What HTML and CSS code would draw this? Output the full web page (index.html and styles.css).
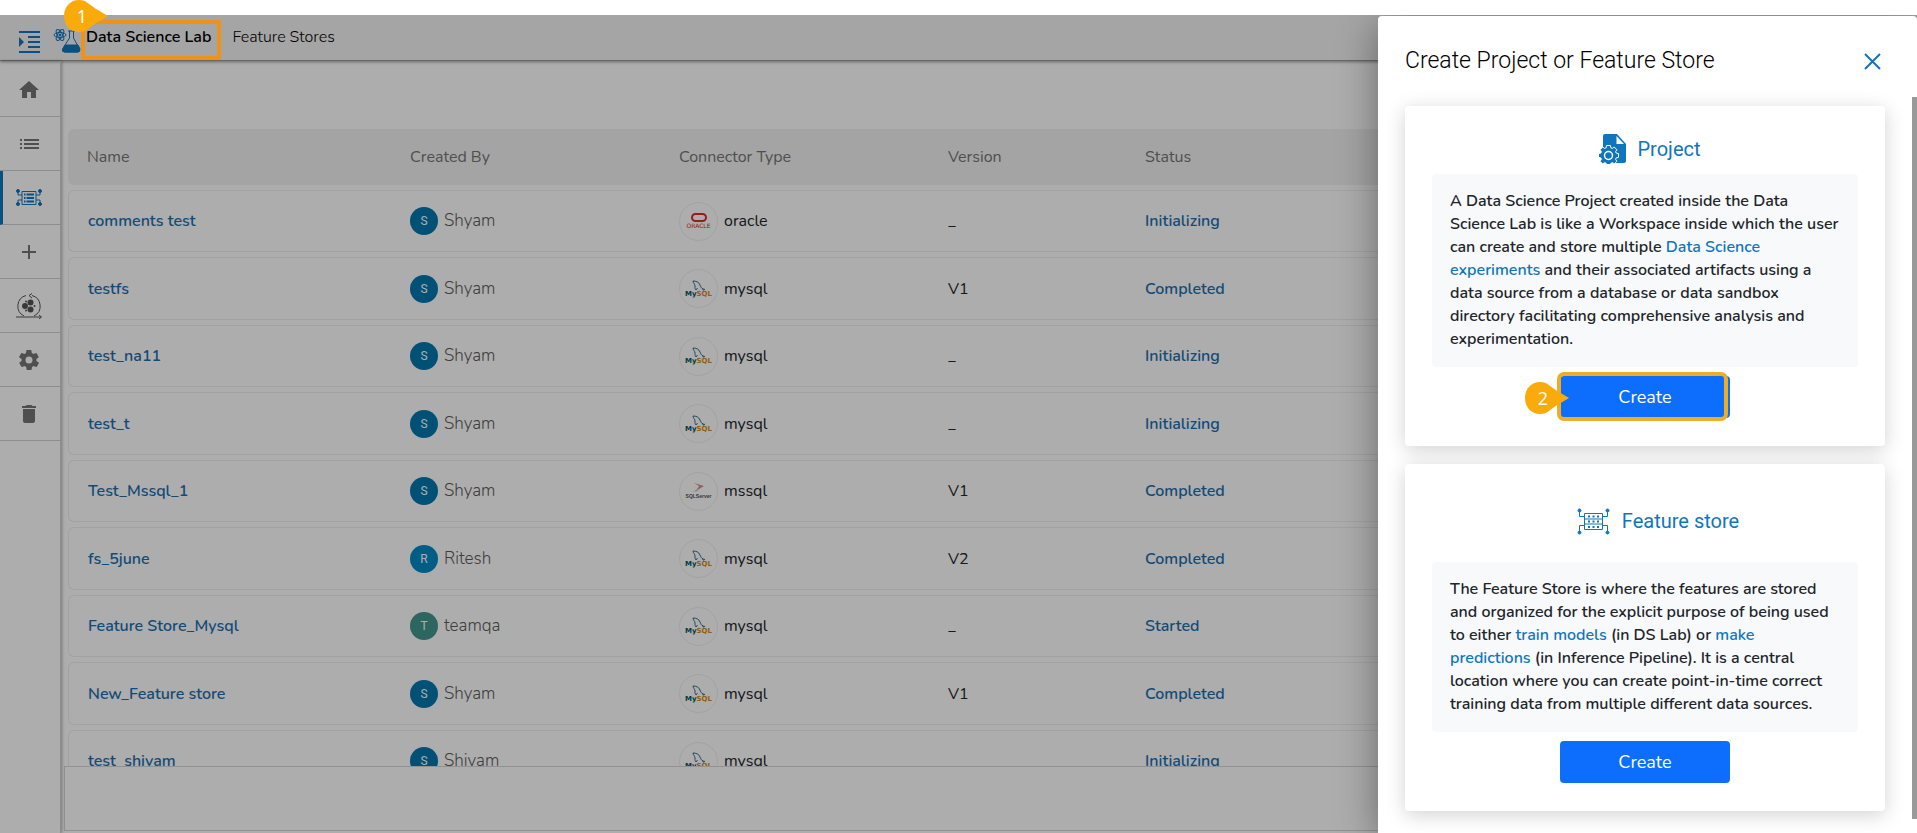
FILE: index.html
```
<!DOCTYPE html>
<html lang="en">
<head>
<meta charset="utf-8">
<title>Data Science Lab</title>
<link rel="stylesheet" href="styles.css">
</head>
<body>
<svg class="defs" aria-hidden="true">
  <symbol id="mysql" viewBox="0 0 14 11">
    <path d="M1 1c3 0 6 1 7 4 1 2 1 3 3 4l2 .5M1 1c0 2 2 3 2 5s0 3 1 4l1.500-2" fill="none" stroke="#2f6d88" stroke-width="1"/>
    <path d="M10.500 8.500l1 2" fill="none" stroke="#2f6d88"/>
  </symbol>
  <symbol id="oracle" viewBox="0 0 16 9">
    <rect x="1" y="1" width="14" height="7" rx="3.500" fill="none" stroke="#e0292b" stroke-width="2"/>
  </symbol>
  <symbol id="mssql" viewBox="0 0 14 11">
    <path d="M2 1l10 3-8 5 3-5z" fill="#e58a8c"/>
    <path d="M6 6l-5 4 5-1z" fill="#ccc"/>
  </symbol>
</svg>
<div class="app">
  <header class="topbar">
    <button class="menu-btn" aria-label="Toggle menu">
      <svg width="21" height="22" viewBox="0 0 21 22"><path d="M0 1h21M9 6h12M9 11h12M9 16h12M0 21h21" stroke="#0f76bd" stroke-width="2"/><path d="M0 6l5 5-5 5z" fill="#0f76bd"/></svg>
    </button>
    <svg class="lab-icon" width="28" height="25" viewBox="0 0 28 25" fill="none" stroke="#0f76bd"><ellipse cx="7" cy="7" rx="6" ry="2.500"/><ellipse cx="7" cy="7" rx="6" ry="2.500" transform="rotate(60 7 7)"/><ellipse cx="7" cy="7" rx="6" ry="2.500" transform="rotate(120 7 7)"/><circle cx="7" cy="7" r="1" fill="#0f76bd"/><path d="M15 3h7M16.500 3v7L9.500 21q-1 3 2 3h13q3 0 2-3L20.500 10V3"/><path d="M12 17h13l2 4q0 3-2 3H12q-3 0-2-3z" fill="#0f76bd"/></svg>
    <nav class="tabs"><a class="tab tab-active" href="#">Data Science Lab</a><a class="tab" href="#">Feature Stores</a></nav>
  </header>
  <div class="body">
    <nav class="rail">
      <a class="rail-item" href="#" aria-label="Home"><svg width="24" height="24" viewBox="0 0 24 24"><path d="M10 20v-6h4v6h5v-8h3L12 3 2 12h3v8z"/></svg></a>
      <a class="rail-item" href="#" aria-label="List"><svg width="24" height="24" viewBox="0 0 24 24"><path d="M3 7h2v2H3zM3 11h2v2H3zM3 15h2v2H3zM7 7h15v2H7zM7 11h15v2H7zM7 15h15v2H7z"/></svg></a>
      <a class="rail-item rail-active" href="#" aria-label="Data Science Lab"><svg width="26" height="18" viewBox="0 0 26 18" stroke="#0f76bd" fill="none"><circle cx="2" cy="2" r="1.500" fill="#0f76bd"/><circle cx="24" cy="2" r="1.500" fill="#0f76bd"/><circle cx="2" cy="15" r="1.500" fill="#0f76bd"/><circle cx="24" cy="15" r="1.500" fill="#0f76bd"/><path d="M2 2v4h4M24 2v4h-4M2 15v-4h4M24 15v-4h-4M6 2.500h14v13H6z"/><path d="M8 5.500h1.500M10.500 5.500H18M8 9h1.500M10.500 9H18M8 12.500h1.500M10.500 12.500H18" stroke-width="2"/></svg></a>
      <a class="rail-item" href="#" aria-label="Add"><svg width="24" height="24" viewBox="0 0 24 24"><path d="M11 5h2v6h6v2h-6v6h-2v-6H5v-2h6z"/></svg></a>
      <a class="rail-item" href="#" aria-label="Pipelines"><svg width="26" height="26" viewBox="0 0 26 26"><path d="M10 2.500A11 11 0 0 0 8 23M16 2.500A11 11 0 0 1 18 23M0 24h25M16 .5l-3 2 3 2.500M23 22l2.500 2-2.500 2" fill="none" stroke="#555"/><g fill="#555"><circle cx="9" cy="13" r="3"/><circle cx="14.500" cy="9.500" r="3"/><circle cx="14.500" cy="16.500" r="3"/><circle cx="18.500" cy="13" r="1"/><circle cx="10" cy="8.500" r="1"/><circle cx="10" cy="17.500" r="1"/></g></svg></a>
      <a class="rail-item" href="#" aria-label="Settings"><svg width="24" height="24" viewBox="0 0 24 24"><path d="M19.400 13c0-.3.100-.6.100-1s0-.7-.1-1l2.100-1.600c.2-.2.300-.4.100-.7l-2-3.400c-.1-.2-.4-.3-.6-.2l-2.500 1c-.5-.4-1.100-.7-1.700-1l-.4-2.600c0-.3-.2-.5-.5-.5h-4c-.3 0-.5.2-.5.400l-.4 2.700c-.6.2-1.200.6-1.700 1l-2.500-1c-.2-.1-.5 0-.6.200l-2 3.400c-.1.200-.1.500.1.700L4.600 11c0 .3-.1.700-.1 1s0 .7.100 1l-2.100 1.600c-.2.200-.3.400-.1.700l2 3.400c.1.200.4.300.6.200l2.500-1c.5.400 1.100.7 1.700 1l.4 2.600c0 .3.200.5.500.5h4c.3 0 .5-.2.500-.4l.4-2.700c.6-.2 1.200-.6 1.700-1l2.500 1c.2.100.5 0 .6-.2l2-3.400c.1-.2.100-.5-.1-.7zM12 15.500a3.500 3.500 0 1 1 0-7 3.500 3.500 0 0 1 0 7z"/></svg></a>
      <a class="rail-item" href="#" aria-label="Trash"><svg width="24" height="24" viewBox="0 0 24 24"><path d="M6 19c0 1.100.9 2 2 2h8c1.100 0 2-.9 2-2V7H6zM19 4h-3.500l-1-1h-5l-1 1H5v2h14z"/></svg></a>
    </nav>
    <main class="main">
      <div class="table-wrap">
      <table class="stores">
        <colgroup><col class="c-name"><col class="c-by"><col class="c-type"><col class="c-ver"><col class="c-status"></colgroup>
        <thead><tr><th>Name</th><th>Created By</th><th>Connector Type</th><th>Version</th><th>Status</th></tr></thead>
        <tbody>
          <tr><td><a href="#">comments test</a></td><td><div class="cell"><span class="avatar">S</span><span class="user">Shyam</span></div></td><td><div class="cell"><span class="logo"><svg class="mark-oracle"><use href="#oracle"/></svg><span class="word word-oracle">ORACLE</span></span>oracle</div></td><td>_</td><td><a href="#">Initializing</a></td></tr>
          <tr><td><a href="#">testfs</a></td><td><div class="cell"><span class="avatar">S</span><span class="user">Shyam</span></div></td><td><div class="cell"><span class="logo"><svg class="mark"><use href="#mysql"/></svg><span class="word">My<span class="word-sql">SQL</span></span></span>mysql</div></td><td>V1</td><td><a href="#">Completed</a></td></tr>
          <tr><td><a href="#">test_na11</a></td><td><div class="cell"><span class="avatar">S</span><span class="user">Shyam</span></div></td><td><div class="cell"><span class="logo"><svg class="mark"><use href="#mysql"/></svg><span class="word">My<span class="word-sql">SQL</span></span></span>mysql</div></td><td>_</td><td><a href="#">Initializing</a></td></tr>
          <tr><td><a href="#">test_t</a></td><td><div class="cell"><span class="avatar">S</span><span class="user">Shyam</span></div></td><td><div class="cell"><span class="logo"><svg class="mark"><use href="#mysql"/></svg><span class="word">My<span class="word-sql">SQL</span></span></span>mysql</div></td><td>_</td><td><a href="#">Initializing</a></td></tr>
          <tr><td><a href="#">Test_Mssql_1</a></td><td><div class="cell"><span class="avatar">S</span><span class="user">Shyam</span></div></td><td><div class="cell"><span class="logo"><svg class="mark"><use href="#mssql"/></svg><span class="word word-mssql">SQLServer</span></span>mssql</div></td><td>V1</td><td><a href="#">Completed</a></td></tr>
          <tr><td><a href="#">fs_5june</a></td><td><div class="cell"><span class="avatar avatar-sky">R</span><span class="user">Ritesh</span></div></td><td><div class="cell"><span class="logo"><svg class="mark"><use href="#mysql"/></svg><span class="word">My<span class="word-sql">SQL</span></span></span>mysql</div></td><td>V2</td><td><a href="#">Completed</a></td></tr>
          <tr><td><a href="#">Feature Store_Mysql</a></td><td><div class="cell"><span class="avatar avatar-teal">T</span><span class="user">teamqa</span></div></td><td><div class="cell"><span class="logo"><svg class="mark"><use href="#mysql"/></svg><span class="word">My<span class="word-sql">SQL</span></span></span>mysql</div></td><td>_</td><td><a href="#">Started</a></td></tr>
          <tr><td><a href="#">New_Feature store</a></td><td><div class="cell"><span class="avatar">S</span><span class="user">Shyam</span></div></td><td><div class="cell"><span class="logo"><svg class="mark"><use href="#mysql"/></svg><span class="word">My<span class="word-sql">SQL</span></span></span>mysql</div></td><td>V1</td><td><a href="#">Completed</a></td></tr>
          <tr><td><a href="#">test_shivam</a></td><td><div class="cell"><span class="avatar">S</span><span class="user">Shivam</span></div></td><td><div class="cell"><span class="logo"><svg class="mark"><use href="#mysql"/></svg><span class="word">My<span class="word-sql">SQL</span></span></span>mysql</div></td><td></td><td><a href="#">Initializing</a></td></tr>
        </tbody>
      </table>
      </div>
      <footer class="pager"></footer>
    </main>
  </div>
  <div class="backdrop"></div>
  <aside class="drawer" role="dialog" aria-labelledby="drawer-title">
    <div class="drawer-head">
      <h1 id="drawer-title">Create Project or Feature Store</h1>
      <button class="close" aria-label="Close"><svg width="17" height="17" viewBox="0 0 17 17"><path d="M1 1l15 15M16 1L1 16" stroke="#0f76bd" stroke-width="2"/></svg></button>
    </div>
    <div class="drawer-body">
      <section class="card">
        <h2 class="card-title"><svg width="28" height="30" viewBox="0 0 28 30"><path d="M6 0h12l9 10v17q0 2-2 2H6q-2 0-2-2V2q0-2 2-2z" fill="#0f76bd"/><path d="M17.500 2v8H25z" fill="#fff"/><path d="M7.600 11.500h3.800l.5 2.300 1.400.6 2-1.300 2.600 2.600-1.300 2 .6 1.400 2.300.5v3.800l-2.300.5-.6 1.400 1.300 2-2.600 2.600-2-1.300-1.400.6-.5 2.300H7.600l-.5-2.300-1.400-.6-2 1.300-2.600-2.600 1.300-2-.6-1.400-2.300-.5v-3.800l2.300-.5.6-1.400-1.300-2 2.600-2.600 2 1.300 1.400-.6z" fill="#0f76bd" stroke="#fff"/><circle cx="9.500" cy="21.500" r="4" fill="none" stroke="#fff" stroke-width="1.500"/></svg>Project</h2>
        <p class="desc">A Data Science Project created inside the Data Science Lab is like a Workspace inside which the user can create and store multiple <span class="hl">Data Science experiments</span> and their associated artifacts using a data source from a database or data sandbox directory facilitating comprehensive analysis and experimentation.</p>
        <div class="action">
          <button class="create">Create</button>
          <span class="focus-frame"></span>
          <span class="pin pin-two"><svg width="44" height="32" viewBox="0 0 44 32"><path d="M15 0C6 0 0 7 0 16s6 16 15 16c8 0 10-5 19-10l10-6-10-6C25 5 23 0 15 0z" fill="#faab0b"/></svg><span class="pin-num">2</span></span>
        </div>
      </section>
      <section class="card card-tall">
        <h2 class="card-title"><svg width="33" height="27" viewBox="0 0 33 27" fill="none" stroke="#0f76bd"><g fill="#0f76bd"><circle cx="2.500" cy="2.500" r="1.500"/><circle cx="30.500" cy="2.500" r="1.500"/><circle cx="2.500" cy="24.500" r="1.500"/><circle cx="30.500" cy="24.500" r="1.500"/></g><path d="M2.500 2v6.500h5M30.500 2v6.500h-5M2.500 24v-6.500h5M30.500 24v-6.500h-5M7.500 5.500h18v16h-18zM7.500 11h18M7.500 16h18"/><path d="M11 8.500h11M11 13.500h11M11 19h11" stroke-width="2" stroke-dasharray="2 2.500"/></svg>Feature store</h2>
        <p class="desc">The Feature Store is where the features are stored and organized for the explicit purpose of being used to either <span class="hl">train models</span> (in DS Lab) or <span class="hl">make predictions</span> (in Inference Pipeline). It is a central location where you can create point-in-time correct training data from multiple different data sources.</p>
        <div class="action"><button class="create">Create</button></div>
      </section>
    </div>
    <span class="scroll-thumb"></span>
  </aside>
  <span class="tab-frame"></span>
</div>
<span class="pin pin-one"><svg width="44" height="32" viewBox="0 0 44 32"><path d="M15 0C6 0 0 7 0 16s6 16 15 16c8 0 10-5 19-10l10-6-10-6C25 5 23 0 15 0z" fill="#faab0b"/></svg><span class="pin-num">1</span></span>
</body>
</html>
```

FILE: styles.css
```
* { box-sizing: border-box; }
html { height: 100%; }
body { margin: 0; height: 100%; padding-top: 15px; background: #fff; font: 16px/24px Nunito, Lato, "Open Sans", sans-serif; color: #212529; }
a { color: inherit; text-decoration: none; }
button { font: inherit; border: 0; cursor: pointer; }
.defs { position: absolute; width: 0; height: 0; }
.app { position: relative; height: 100%; display: flex; flex-direction: column; overflow: hidden; background: #fff; }
.topbar { display: flex; align-items: center; height: 46px; flex: none; padding-left: 19px; background: #f4f4f4; border-bottom: 1px solid #999; box-shadow: 0 1px 3px rgba(0,0,0,.4); z-index: 1; }
.menu-btn { background: none; padding: 8px 0 0; width: 21px; }
.menu-btn svg, .rail-item svg, .close svg { display: block; }
.lab-icon { margin-left: 13px; margin-top: 6px; }
.tabs { display: flex; gap: 21px; margin-left: 5px; padding-bottom: 1px; font-weight: 300; color: #000; }
.tab-active { font-weight: 600; }
.body { flex: 1; display: flex; min-height: 0; }
.rail { width: 61px; flex: none; padding-top: 2px; border-right: 1px solid #d0d0d0; box-shadow: 1px 0 3px rgba(0,0,0,.3); z-index: 1; }
.rail-item { height: 54px; display: flex; align-items: center; justify-content: center; border-bottom: 1px solid #d0d0d0; padding-right: 3px; fill: #757575; }
.rail-active { border-left: 3px solid #0f76bd; padding-right: 6px; }
.main { flex: 1; min-width: 0; display: flex; flex-direction: column; padding: 65px 0 2px 3px; }
.table-wrap { flex: 1; min-height: 0; overflow: hidden; padding-left: 4px; }
.stores { width: 100%; table-layout: fixed; border-collapse: separate; border-spacing: 0 5px; margin-top: -2px; }
.c-name { width: 323px; } .c-by { width: 269px; } .c-type { width: 269px; } .c-ver { width: 197px; }
th { height: 56px; padding: 0 0 0 19px; background: #f2f2f2; text-align: left; font-weight: 400; color: #757575; }
th:first-child { border-radius: 6px 0 0 6px; }
td { height: 62px; padding: 0 0 0 19px; border: solid #efefef; border-width: 1px 0; }
tr:nth-child(even) td { height: 63px; }
td:first-child { border-left-width: 1px; border-radius: 6px 0 0 6px; }
td a { font-weight: 600; color: #1c6fb0; }
.cell { display: flex; align-items: center; gap: 6px; }
.avatar { width: 28px; height: 28px; border-radius: 50%; background: #0078ad; color: #fff; display: grid; place-items: center; font: 12px/16px Roboto, sans-serif; }
.avatar-sky { background: #0089c4; }
.avatar-teal { background: #43968e; }
.user { font-size: 17px; font-weight: 300; color: #5c5c5c; }
.logo { width: 39px; height: 39px; border: 1px solid #efefef; border-radius: 50%; display: flex; flex-direction: column; align-items: center; justify-content: center; }
.mark { width: 14px; height: 11px; }
.mark-oracle { width: 16px; height: 9px; }
.word { font: 700 7px/7px "DejaVu Sans", sans-serif; color: #00546b; }
.word-sql { color: #e08a10; }
.word-oracle { font: 6px/7px "DejaVu Sans", sans-serif; color: #e0292b; }
.word-mssql { font: 700 5px/7px "Liberation Sans", sans-serif; color: #555; }
.pager { flex: none; height: 65px; border: 1px solid #d8d8d8; background: #fff; }
.backdrop { position: absolute; inset: 0; background: rgba(0,0,0,.32); z-index: 2; }
.drawer { position: absolute; top: 1px; right: 0; bottom: 0; width: 539px; z-index: 3; background: #fff; border-radius: 4px 4px 0 0; box-shadow: 0 8px 40px rgba(0,0,0,.4); display: flex; flex-direction: column; }
.drawer-head { display: flex; align-items: center; justify-content: space-between; height: 90px; flex: none; padding: 0 36px 0 27px; }
h1 { margin: 0; font: 300 23px/32px Roboto, sans-serif; color: #000; }
.close { background: none; padding: 0; }
.drawer-body { display: flex; flex-direction: column; gap: 18px; padding: 0 32px 0 27px; }
.card { padding: 28px 27px; background: #fff; border-radius: 4px; box-shadow: 0 4px 20px rgba(0,0,0,.18); }
.card-title { display: flex; align-items: center; justify-content: center; gap: 10px; height: 30px; margin: 0 0 10px; padding-left: 10px; font: 400 20px/30px Roboto, sans-serif; color: #0f76bd; }
.card-tall { padding-top: 42px; }
.card-tall .card-title { margin-bottom: 26px; padding-left: 26px; gap: 12px; }
.desc { margin: 0; padding: 16px 16px 16px 18px; background: #f8f9fb; border-radius: 4px; font-weight: 600; line-height: 23px; }
.card-tall .desc { padding-right: 24px; }
.hl { color: #0f76bd; }
.action { display: grid; place-items: center; position: relative; margin-top: 9px; }
.create { width: 170px; height: 42px; border-radius: 4px; background: #0d6efd; color: #fff; font-size: 18px; }
.focus-frame { position: absolute; width: 171px; height: 49px; border: 4px solid #eead26; border-radius: 7px; top: -4px; left: calc(50% - 88px); }
.pin { position: absolute; width: 44px; height: 32px; z-index: 5; }
.pin svg { display: block; }
.pin-num { position: absolute; left: 0; top: 0; width: 36px; text-align: center; font: 18px/32px "Open Sans", sans-serif; color: #fff; }
.pin-one { left: 64px; top: 0; }
.pin-two { left: calc(50% - 120px); top: 6px; }
.tab-frame { position: absolute; left: 81px; top: 5px; width: 140px; height: 40px; border: 4px solid #ee9219; z-index: 4; }
.scroll-thumb { position: absolute; right: 0; top: 81px; bottom: 14px; width: 5px; background: #999; }
```
